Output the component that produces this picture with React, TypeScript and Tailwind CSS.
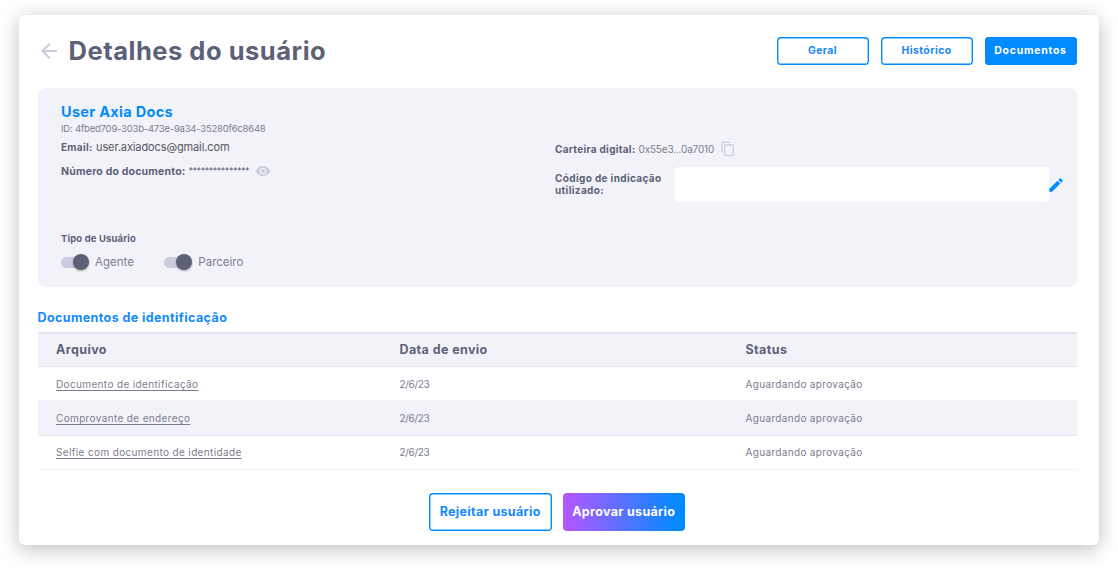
import type { ReactNode } from "react";
import { MdArrowBack, MdContentCopy, MdEdit, MdVisibility } from "react-icons/md";

const tabs = [
  { label: "Geral", tracking: "tracking-[0.35px]", active: false },
  { label: "Histórico", tracking: "tracking-[0.4px]", active: false },
  { label: "Documentos", tracking: "tracking-[0.73px]", active: true },
];

const documents = [
  { name: "Documento de identificação", date: "2/6/23", status: "Aguardando aprovação" },
  { name: "Comprovante de endereço", date: "2/6/23", status: "Aguardando aprovação" },
  { name: "Selfie com documento de identidade", date: "2/6/23", status: "Aguardando aprovação" },
];

function Toggle({ children }: { children: ReactNode }) {
  return (
    <label className="flex h-4 items-center">
      <span className="flex h-[11px] w-[28px] items-center justify-end rounded-full bg-[#c9cbe1]">
        <span className="size-4 shrink-0 rounded-full bg-[#5c6178] shadow-[0_1px_2px_rgba(0,0,0,0.3)]" />
      </span>
      <span className="ml-1.5 pt-px text-[11.5px] text-[#7b7d8e]">{children}</span>
    </label>
  );
}

export default function App() {
  return (
    <div className="h-[568px] w-[1118px] overflow-hidden bg-white pt-[15px] pl-[19px] font-['Inter',sans-serif] text-[#5c6178]">
      <main className="h-[530px] w-[1080px] rounded-[6px] bg-white pt-[22px] pr-[22.5px] pl-[18.5px] shadow-[0_4px_20px_rgba(0,0,0,0.26)]">
        <header className="flex h-7 items-center justify-between">
          <div className="flex items-center">
            <MdArrowBack className="-ml-px size-6 text-[#c9cbe1]" />
            <h1 className="ml-2 text-[25.5px] leading-7 font-bold tracking-[0.52px]">Detalhes do usuário</h1>
          </div>
          <nav className="flex gap-3">
            {tabs.map((tab) => (
              <button
                key={tab.label}
                className={`flex h-[27.5px] w-[92px] items-center justify-center rounded-[4px] text-[10.5px] font-bold shadow-[inset_0_0_0_1.4px_#008aff] ${tab.tracking} ${
                  tab.active ? "bg-[#008aff] text-white" : "bg-white text-[#1a87fa]"
                }`}
              >
                {tab.label}
              </button>
            ))}
          </nav>
        </header>

        <section className="mt-[23px] flex h-[199px] rounded-[8px] bg-[#f2f3f8] pt-4 pl-[23.5px]">
          <div className="w-[494px]">
            <h2 className="text-[14.5px] leading-4 font-bold tracking-[0.3px] text-[#008aff]">User Axia Docs</h2>
            <p className="mt-[1.5px] text-[9.5px] leading-[14px] tracking-[-0.225px] text-[#7b7d8e]">
              ID: 4fbed709-303b-473e-9a34-35280f6c8648
            </p>
            <p className="mt-1 flex items-center leading-[14px]">
              <span className="text-[10px] font-bold tracking-[0.29px]">Email:</span>
              <span className="ml-[3.5px] text-[11px] tracking-[-0.11px] text-[#55565f]">user.axiadocs@gmail.com</span>
            </p>
            <div className="mt-[9.5px] flex h-4 items-center">
              <span className="pt-px text-[10.5px] font-bold tracking-[0.19px]">Número do documento:</span>
              <span className="ml-[3px] text-[9px] tracking-[-0.47px]">***************</span>
              <MdVisibility className="ml-1.5 size-4 text-[#c9cbe1]" />
            </div>
            <h3 className="mt-[53px] text-[9.5px] leading-[14px] font-bold tracking-[0.14px]">Tipo de Usuário</h3>
            <div className="mt-2 flex gap-[30.5px]">
              <Toggle>Agente</Toggle>
              <Toggle>Parceiro</Toggle>
            </div>
          </div>

          <div className="pt-[37px]">
            <div className="flex h-4 items-center">
              <span className="text-[10px] font-bold tracking-[0.3px]">Carteira digital:</span>
              <span className="ml-[3px] text-[10px] tracking-[-0.18px] text-[#7b7d8e]">0x55e3...0a7010</span>
              <MdContentCopy className="ml-1.5 size-4 text-[#c9cfe3]" />
            </div>
            <div className="mt-[10px] flex h-[35px] items-center">
              <label className="w-[120px] pb-[1.5px] text-[10px] leading-3 font-bold tracking-[0.36px]">
                Código de indicação
                <br />
                utilizado:
              </label>
              <input className="h-[35px] w-[374px] rounded-[4px] bg-white text-xs outline-none" />
              <MdEdit className="mt-px -ml-[2.5px] size-[18px] text-[#008aff]" />
            </div>
          </div>
        </section>

        <h2 className="mt-[23px] text-[12.5px] leading-4 font-bold tracking-[0.4px] text-[#1289fd]">
          Documentos de identificação
        </h2>

        <div className="mt-[6px] text-[10px] text-[#7b7d8e]">
          <div className="grid h-[35px] grid-cols-[343.5px_346px_1fr] items-center border-t-2 border-b border-[#e3e4ee] bg-[#f2f3f8] pl-[18.5px] text-[12.5px] font-bold tracking-[0.4px] text-[#5c6178]">
            <span>Arquivo</span>
            <span>Data de envio</span>
            <span>Status</span>
          </div>
          {documents.map((doc) => (
            <div
              key={doc.name}
              className="grid h-[34.4px] grid-cols-[343.5px_346px_1fr] items-center border-b border-[#f0f1f5] bg-white pt-px pl-[18.5px] even:bg-white odd:border-[#e6e7ef] odd:bg-[#f2f3f8]"
            >
              <a className="tracking-[0.36px] underline underline-offset-[1.5px]">{doc.name}</a>
              <span className="tracking-[-0.3px]">{doc.date}</span>
              <span className="tracking-[0.33px]">{doc.status}</span>
            </div>
          ))}
        </div>

        <footer className="mt-[23px] flex gap-[11px] pl-[391.5px] text-[12.5px] font-bold">
          <button className="h-[38px] w-[122.5px] rounded-[4px] bg-white pt-px tracking-[0.34px] text-[#1289fd] shadow-[inset_0_0_0_1.4px_#008aff]">
            Rejeitar usuário
          </button>
          <button className="h-[38px] w-[122.5px] rounded-[4px] bg-linear-to-r/srgb from-[#b557ff] to-[#008aff] to-95% pt-px tracking-[0.33px] text-white">
            Aprovar usuário
          </button>
        </footer>
      </main>
    </div>
  );
}
